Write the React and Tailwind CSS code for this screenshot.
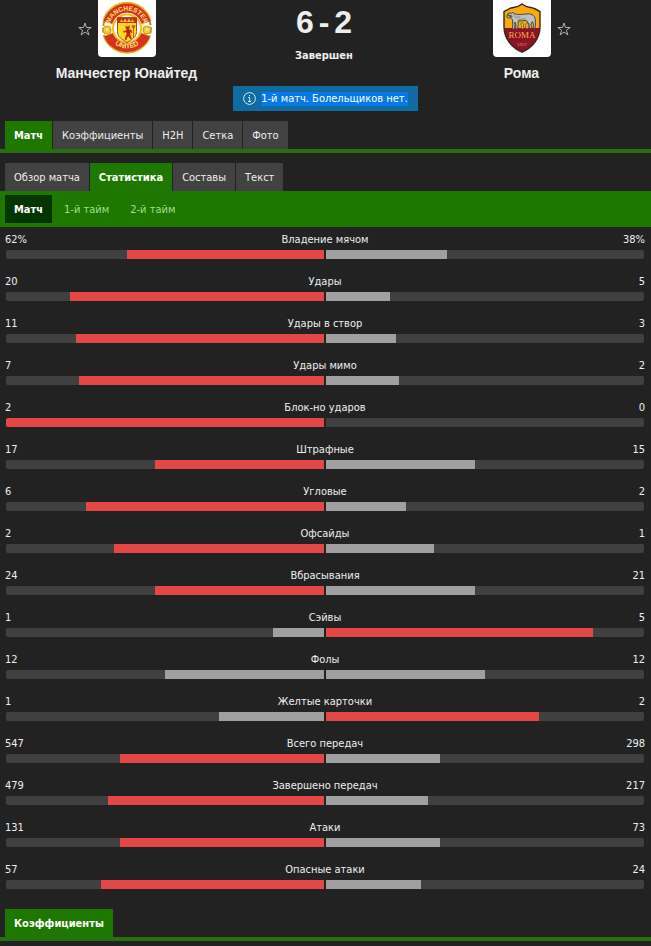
import { clsx } from 'clsx';

const stats = [
  { label: 'Владение мячом', home: 62, away: 38, unit: '%' },
  { label: 'Удары', home: 20, away: 5 },
  { label: 'Удары в створ', home: 11, away: 3 },
  { label: 'Удары мимо', home: 7, away: 2 },
  { label: 'Блок-но ударов', home: 2, away: 0 },
  { label: 'Штрафные', home: 17, away: 15 },
  { label: 'Угловые', home: 6, away: 2 },
  { label: 'Офсайды', home: 2, away: 1 },
  { label: 'Вбрасывания', home: 24, away: 21 },
  { label: 'Сэйвы', home: 1, away: 5 },
  { label: 'Фолы', home: 12, away: 12 },
  { label: 'Желтые карточки', home: 1, away: 2 },
  { label: 'Всего передач', home: 547, away: 298 },
  { label: 'Завершено передач', home: 479, away: 217 },
  { label: 'Атаки', home: 131, away: 73 },
  { label: 'Опасные атаки', home: 57, away: 24 },
];

function UnitedCrest() {
  return (
    <svg viewBox="0 0 58 57" className="w-full" role="img" aria-label="Манчестер Юнайтед">
      <defs>
        <path id="arc-top" d="M11.500 28a17.500 17.500 0 0 1 35 0" />
        <path id="arc-bottom" d="M9 28.500a20 20 0 0 0 40 0" />
      </defs>
      <circle cx="29" cy="28.500" r="23.800" fill="none" stroke="#a48f2e" strokeWidth="2" strokeDasharray="5 2" />
      <circle cx="29" cy="28.500" r="19" fill="#fff3c4" />
      <circle cx="29" cy="28.500" r="14" fill="#fff" stroke="#f0bd1c" strokeWidth="2" />
      <path d="M9.500 22.500a20 20 0 0 1 39 0" fill="none" stroke="#e9b51f" strokeWidth="10.500" />
      <path d="M9.800 22.500a20 20 0 0 1 38.400 0" fill="none" stroke="#d8321f" strokeWidth="9" />
      <path d="M10 34.500a20 20 0 0 0 38 0" fill="none" stroke="#e9b51f" strokeWidth="10.500" />
      <path d="M10.300 34.800a20 20 0 0 0 37.400 0" fill="none" stroke="#d8321f" strokeWidth="9" />
      <g fill="#f6cf2c" stroke="#c9951c">
        <circle cx="9" cy="30" r="4" />
        <circle cx="49" cy="30" r="4" />
      </g>
      <path d="M7 29l2-1.500 2 1.500-.7 2.500H7.700zM47 29l2-1.500 2 1.500-.7 2.500h-2.600z" fill="#fbe88a" stroke="#d9a92a" strokeWidth=".4" />
      <path d="M19.500 17.500h19v14c0 6-5 8-9.500 11-4.500-3-9.500-5-9.500-11z" fill="#f9dc22" stroke="#b5451c" />
      <path d="M20 18h18v5H20z" fill="#c92a1b" />
      <path d="M22 22l1.500-3 1.500 3 2-3.500 2 3.500 2-3.500 2 3.500 1.500-3 1.500 3z" fill="#f4c52a" />
      <path d="M27.500 25l1 1.500 2-.2.900-1.300.3 2.700-.8 1.600 2.600.8.900 3-1.400-.4-.8-1.200.2 3.500 1.400 3.200-1.600 1-1.500-3-1.700 1.200-.6 2.800-1.800-.6.900-3.200 1.200-2.200-.7-2.400-2.300 1.200-.6-2.500 1.300.5 2.300-1.300-1-1.500z" fill="#c3251a" />
      <path d="M35.500 25v13M34.300 25v2.500h2.400V25" fill="none" stroke="#c3251a" strokeWidth=".7" />
      <g fill="#fde86e" fontFamily="Liberation Sans, Arial, sans-serif" fontWeight="700" textAnchor="middle">
        <text fontSize="6.500">
          <textPath href="#arc-top" startOffset="50%">MANCHESTER</textPath>
        </text>
        <text fontSize="7">
          <textPath href="#arc-bottom" startOffset="50%">UNITED</textPath>
        </text>
      </g>
    </svg>
  );
}

function RomaCrest() {
  return (
    <svg viewBox="0 0 58 57" className="w-full" role="img" aria-label="Рома">
      <defs>
        <clipPath id="roma-shield">
          <path d="M29 4c-2.500 2-5 3.200-8.500 3.500-3.800.300-6 1.800-9.500 4.200v15c0 12 8 21 18 25.500 10-4.500 18-13.500 18-25.500v-15C43.500 9.300 41.300 7.800 37.500 7.500 34 7.200 31.500 6 29 4z" />
        </clipPath>
      </defs>
      <g clipPath="url(#roma-shield)">
        <path d="M8 2h43v26H8z" fill="#f8ab0c" />
        <path d="M8 28h43v26H8z" fill="#8c1324" />
      </g>
      <path d="M29 4c-2.500 2-5 3.200-8.500 3.500-3.800.300-6 1.800-9.500 4.200v15c0 12 8 21 18 25.500 10-4.500 18-13.500 18-25.500v-15C43.500 9.300 41.300 7.800 37.500 7.500 34 7.200 31.500 6 29 4z" fill="none" stroke="#37231c" strokeWidth="1.400" />
      <path d="M14.500 14l2.500-1 1.500.3 1.500-1 1.200 1.500c3 .8 5 1 8.800.5 4-.5 7-.7 9 .3 2 1 3 2.500 3.300 5l.2 6-.8 2.900h-1.700l.6-3.400-1.100-3.500-1.500 2.500.7 4.400h-2.200l-.5-4.400-2.500-3.500-5.500.2-3 .3.2 3.500-.5 4.500h-2l.3-4.500-1.300-2.500.2 3.500-.7 3.500h-2l.6-4.500-.4-5-1.400-2-2.500.5-1.700-1z" fill="#bcc1c3" stroke="#3f3a38" strokeWidth=".9" />
      <path d="M14.800 14.500l3.200.4 1.800 1.600-1.600.7-3-.9z" fill="#5c5654" />
      <path d="M20.500 14.500l2 3 5-.7M25 19.500l8-.7" fill="none" stroke="#77726b" strokeWidth=".7" />
      <path d="M28.500 28.500v-3l-1-1.500 1.500-1.500 1.500 1.500.2 4.500M33 28.500l-.5-3 1.500-3 1.500 2-.3 4" fill="#e5ab58" stroke="#604321" strokeWidth=".6" />
      <g fill="#f5b04a" fontFamily="Liberation Serif, Times New Roman, serif" textAnchor="middle">
        <text x="29" y="38" fontSize="9">ROMA</text>
        <text x="29" y="45.500" fontSize="5" fill="#d9a07a">1927</text>
      </g>
    </svg>
  );
}

function FavouriteButton({ team }) {
  return (
    <button type="button" aria-label={`В избранное: ${team}`} className="shrink-0">
      <svg viewBox="0 0 14 14" className="size-3.5" fill="none" stroke="#bdbdbd" strokeWidth=".9">
        <path d="M7 1l1.500 4.500h4.700L9.400 8.300l1.500 4.600L7 10.100l-3.900 2.800 1.500-4.600L.8 5.500h4.700z" />
      </svg>
    </button>
  );
}

function Team({ name, away, children }) {
  return (
    <div className="flex flex-1 flex-col items-center gap-1.5">
      <div className={clsx('flex items-center gap-1.5', away && 'flex-row-reverse')}>
        <FavouriteButton team={name} />
        <div className="h-[57px] w-[58px] overflow-hidden rounded-b bg-white">{children}</div>
        <span className="w-3.5" />
      </div>
      <h2 className="font-['Liberation_Sans',Arial,sans-serif] text-sm leading-5 font-bold text-[#eee]">{name}</h2>
    </div>
  );
}

function Tabs({ items, active, line }) {
  return (
    <nav className={clsx('flex gap-px px-[5px]', line && 'border-b-4 border-[#27700f]')}>
      {items.map((item) => (
        <a
          key={item}
          href="#"
          className={clsx(
            'px-[9px] pt-0.5 leading-[26px]',
            item === active ? 'bg-[#1e7800] font-bold text-white' : 'bg-[#424242] text-[#eee]'
          )}
        >
          {item}
        </a>
      ))}
    </nav>
  );
}

function Periods() {
  return (
    <div className="flex gap-[3px] bg-[#1e7800] px-[5px] py-1">
      {['Матч', '1-й тайм', '2-й тайм'].map((period, i) => (
        <button
          key={period}
          type="button"
          className={clsx('px-[9px] pt-0.5 leading-[26px]', i === 0 ? 'bg-[#043500] font-bold text-white' : 'text-[#a5dc96]')}
        >
          {period}
        </button>
      ))}
    </div>
  );
}

function Bar({ width, leading, home }) {
  return (
    <div className={clsx('flex h-[9px] flex-1 overflow-hidden bg-[#404040]', home ? 'justify-end rounded-l-xs' : 'rounded-r-xs')}>
      <div className={leading ? 'bg-[#e34747]' : 'bg-[#a0a0a0]'} style={{ width: `${width}%` }} />
    </div>
  );
}

function StatRow({ label, home, away, unit = '' }) {
  const share = Math.floor((home / (home + away)) * 100);

  return (
    <div className="pt-1.5 pr-1.5 pb-2.5 pl-[5px]">
      <div className="flex leading-[14px]">
        <span className="flex-1">{home}{unit}</span>
        <span>{label}</span>
        <span className="flex-1 text-right">{away}{unit}</span>
      </div>
      <div className="mt-[3px] flex gap-0.5 px-px">
        <Bar home width={share} leading={home > away} />
        <Bar width={100 - share} leading={away > home} />
      </div>
    </div>
  );
}

export default function App() {
  return (
    <div className="min-h-screen bg-[#222] font-['DejaVu_Sans_Condensed','DejaVu_Sans',Tahoma,sans-serif] text-[11px] text-[#eee]">
      <header className="flex pr-2 pl-[5px]">
        <Team name="Манчестер Юнайтед">
          <UnitedCrest />
        </Team>
        <div className="flex w-38 flex-col items-center gap-3 pt-1.5 font-bold">
          <div className="flex gap-[5px] font-['Liberation_Sans',Arial,sans-serif] text-[32px] leading-8">
            <span>6</span>
            <span>-</span>
            <span>2</span>
          </div>
          <div className="leading-3">Завершен</div>
        </div>
        <Team name="Рома" away>
          <RomaCrest />
        </Team>
      </header>

      <div className="mt-[3px] flex justify-center">
        <div className="flex h-[25px] items-center gap-[5px] bg-[#0f6ba0] px-2.5 text-white">
          <svg viewBox="0 0 13 13" className="size-[13px]" fill="none" stroke="#d5e8f2">
            <circle cx="6.500" cy="6.500" r="5.900" />
            <path d="M5.200 5.500h1.500v4M5 9.500h3.200M6.500 3v1.200" />
          </svg>
          <span className="bg-[#0878e8] leading-[14px]">1-й матч. Болельщиков нет.</span>
        </div>
      </div>

      <div className="mt-2.5">
        <Tabs items={['Матч', 'Коэффициенты', 'H2H', 'Сетка', 'Фото']} active="Матч" line />
      </div>
      <div className="mt-2.5">
        <Tabs items={['Обзор матча', 'Статистика', 'Составы', 'Текст']} active="Статистика" />
        <Periods />
      </div>

      <main>
        {stats.map((stat) => (
          <StatRow key={stat.label} {...stat} />
        ))}
      </main>

      <div className="mt-2.5">
        <Tabs items={['Коэффициенты']} active="Коэффициенты" line />
      </div>
    </div>
  );
}
